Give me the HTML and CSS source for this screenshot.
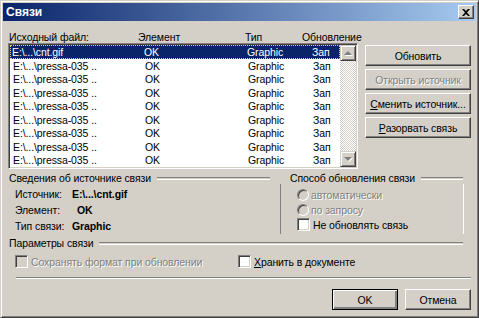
FILE: index.html
```html
<!DOCTYPE html>
<html lang="ru">
<head>
    <meta charset="UTF-8">
    <title>Связи</title>
    <link rel="stylesheet" href="styles.css">
</head>
<body>
<div class="window">
    <div class="titlebar">
        <span>Связи</span>
        <span class="close">
            <svg width="8" height="7" viewBox="0 0 8 7"><path d="M0 0h2l2 2 2-2h2L5 3.5 8 7H6L4 5 2 7H0l3-3.5z" fill="#000"/></svg>
        </span>
    </div>

    <div class="content">
        <div class="top">
            <div class="left">
                <div class="cols heads">
                    <span>Исходный файл:</span>
                    <span>Элемент</span>
                    <span>Тип</span>
                    <span>Обновление</span>
                </div>
                <div class="listbox">
                    <div class="rows">
                        <div class="cols row selected"><span>E:\...\cnt.gif</span><span>OK</span><span>Graphic</span><span>Зап</span></div>
                        <div class="cols row"><span>E:\...\pressa-035 ..</span><span>OK</span><span>Graphic</span><span>Зап</span></div>
                        <div class="cols row"><span>E:\...\pressa-035 ..</span><span>OK</span><span>Graphic</span><span>Зап</span></div>
                        <div class="cols row"><span>E:\...\pressa-035 ..</span><span>OK</span><span>Graphic</span><span>Зап</span></div>
                        <div class="cols row"><span>E:\...\pressa-035 ..</span><span>OK</span><span>Graphic</span><span>Зап</span></div>
                        <div class="cols row"><span>E:\...\pressa-035 ..</span><span>OK</span><span>Graphic</span><span>Зап</span></div>
                        <div class="cols row"><span>E:\...\pressa-035 ..</span><span>OK</span><span>Graphic</span><span>Зап</span></div>
                        <div class="cols row"><span>E:\...\pressa-035 ..</span><span>OK</span><span>Graphic</span><span>Зап</span></div>
                        <div class="cols row"><span>E:\...\pressa-035 ..</span><span>OK</span><span>Graphic</span><span>Зап</span></div>
                    </div>
                    <div class="scrollbar">
                        <div class="sbtn"><span class="arrow up"></span></div>
                        <div class="track"></div>
                        <div class="sbtn"><span class="arrow down"></span></div>
                    </div>
                </div>
            </div>
            <div class="side">
                <div class="btn">Обновить</div>
                <div class="btn disabled">Открыть источник</div>
                <div class="btn"><u>С</u>менить источник...</div>
                <div class="btn"><u>Р</u>азорвать связь</div>
            </div>
        </div>

        <div class="middle">
            <div class="group info">
                <div class="legend"><span>Сведения об источнике связи</span><i class="etch"></i></div>
                <div class="info-body">
                    <div class="info-row"><span class="lbl">Источник:</span><b>E:\...\cnt.gif</b></div>
                    <div class="info-row"><span class="lbl">Элемент:</span><b class="ok">OK</b></div>
                    <div class="info-row"><span class="lbl">Тип связи:</span><b>Graphic</b></div>
                </div>
            </div>
            <div class="group update">
                <div class="legend"><span>Способ обновления связи</span><i class="etch"></i></div>
                <div class="update-body">
                    <div class="opt disabled"><span class="radio"></span>автоматически</div>
                    <div class="opt disabled"><span class="radio"></span>по запросу</div>
                    <div class="opt"><span class="check"></span>Не обновлять связь</div>
                </div>
            </div>
        </div>

        <div class="params">
            <div class="legend"><span>Параметры связи</span><i class="etch"></i></div>
            <div class="params-body">
                <div class="opt disabled keep"><span class="check"></span>Сохранять формат при обновлении</div>
                <div class="opt"><span class="check"></span><span><u>Х</u>ранить в документе</span></div>
            </div>
        </div>

        <div class="separator"></div>

        <div class="footer">
            <div class="btn default">OK</div>
            <div class="btn">Отмена</div>
        </div>
    </div>
</div>
</body>
</html>
```

FILE: styles.css
```css
body {
    margin: 0;
    background: #d4d0c8;
    font-family: "Liberation Sans", Arial, sans-serif;
    font-size: 10.5px;
    letter-spacing: -0.1px;
    color: #000;
}
.window {
    width: 479px;
    height: 318px;
    box-sizing: border-box;
    border: 1px solid;
    border-color: #d4d0c8 #404040 #404040 #d4d0c8;
    box-shadow: inset 1px 1px #fff, inset -1px -1px #808080;
    padding: 1px 2px 2px 2px;
    display: flex;
    flex-direction: column;
}
.titlebar {
    height: 18px;
    margin-top: 1px;
    background: linear-gradient(to right, #0a246a, #a6caf0);
    color: #fff;
    font-weight: bold;
    font-size: 12px;
    letter-spacing: 0;
    display: flex;
    align-items: center;
    justify-content: space-between;
    padding: 0 2px 0 3px;
}
.close {
    width: 16px;
    height: 14px;
    box-sizing: border-box;
    background: #d4d0c8;
    border: 1px solid;
    border-color: #fff #404040 #404040 #fff;
    box-shadow: inset -1px -1px #808080;
    display: flex;
    align-items: center;
    justify-content: center;
}
.content {
    padding: 0 5px 0 5px;
}
.top {
    display: flex;
    gap: 7px;
    margin-top: 10px;
}
.left {
    width: 350px;
}
.cols {
    display: grid;
    line-height: 12px;
    white-space: nowrap;
}
.heads {
    grid-template-columns: 129px 107px 57px 57px;
    padding-left: 1px;
    height: 12px;
}
.listbox {
    height: 126px;
    box-sizing: border-box;
    border: 1px solid;
    border-color: #808080 #fff #fff #808080;
    box-shadow: inset 1px 1px #404040, inset -1px -1px #d4d0c8;
    background: #fff;
    padding: 1px;
    display: flex;
}
.rows {
    flex: 1;
}
.row {
    grid-template-columns: 132px 103px 65px auto;
    height: 13.5px;
    line-height: 13px;
    padding-left: 2px;
    box-sizing: border-box;
    border: 1px solid transparent;
}
.row.selected {
    background: #0a246a;
    color: #fff;
    border: 1px dotted #e8c870;
    padding-left: 1px;
}
.scrollbar {
    width: 16px;
    display: flex;
    flex-direction: column;
}
.sbtn {
    height: 16px;
    box-sizing: border-box;
    background: #d4d0c8;
    border: 1px solid;
    border-color: #d4d0c8 #404040 #404040 #d4d0c8;
    box-shadow: inset 1px 1px #fff, inset -1px -1px #808080;
    display: flex;
    align-items: center;
    justify-content: center;
}
.arrow {
    width: 0;
    height: 0;
    border-left: 4px solid transparent;
    border-right: 4px solid transparent;
}
.arrow.up {
    border-bottom: 4px solid #808080;
    filter: drop-shadow(1px 1px 0 #fff);
}
.arrow.down {
    border-top: 4px solid #808080;
    filter: drop-shadow(1px 1px 0 #fff);
}
.track {
    flex: 1;
    background-color: #fff;
    background-image: repeating-conic-gradient(#d4d0c8 0 25%, #fff 0 50%);
    background-size: 2px 2px;
}
.side {
    width: 106px;
    display: flex;
    flex-direction: column;
    gap: 3px;
    padding-top: 14px;
}
.btn {
    height: 21px;
    box-sizing: border-box;
    background: #d4d0c8;
    border: 1px solid;
    border-color: #fff #404040 #404040 #fff;
    box-shadow: inset -1px -1px #808080;
    display: flex;
    align-items: center;
    justify-content: center;
    white-space: nowrap;
}
.btn.default {
    border: 1px solid #000;
    box-shadow: inset 1px 1px #fff, inset -2px -2px #808080;
}
.disabled {
    color: #808080;
    text-shadow: 1px 1px 0 #fff;
}
.legend {
    display: flex;
    align-items: center;
    height: 12px;
    line-height: 12px;
    white-space: nowrap;
}
.etch {
    flex: 1;
    height: 1px;
    border-top: 1px solid #808080;
    border-bottom: 1px solid #fff;
    margin-left: 6px;
}
.middle {
    display: flex;
    gap: 10px;
    margin-top: 3px;
    padding-left: 1px;
}
.info {
    width: 261px;
}
.info-body {
    padding: 2px 0 0 6px;
}
.info-row {
    display: flex;
    height: 16px;
    align-items: center;
}
.lbl {
    width: 57px;
}
.ok {
    margin-left: 5px;
}
.update {
    width: 183px;
}
.update .legend span {
    margin-left: 10px;
}
.update-body {
    height: 50px;
    border-left: 1px solid #808080;
    box-shadow: 1px 0 0 #fff;
    padding: 3px 0 0 16px;
    box-sizing: border-box;
}
.opt {
    display: flex;
    align-items: center;
    gap: 2px;
    height: 15px;
    white-space: nowrap;
}
.radio {
    width: 12px;
    height: 12px;
    box-sizing: border-box;
    border-radius: 50%;
    border: 1px solid;
    border-color: #808080 #fff #fff #808080;
    box-shadow: inset 1px 1px #404040;
    background: #d4d0c8;
}
.check {
    width: 13px;
    height: 13px;
    box-sizing: border-box;
    border: 1px solid;
    border-color: #808080 #fff #fff #808080;
    box-shadow: inset 1px 1px #404040, inset -1px -1px #d4d0c8;
    background: #fff;
    margin-right: 1px;
}
.opt.disabled .check {
    background: #d4d0c8;
}
.params {
    margin-top: 3px;
    padding-left: 1px;
    width: 454px;
}
.params-body {
    display: flex;
    margin-top: 5px;
    padding-left: 6px;
}
.keep {
    width: 223px;
}
.separator {
    margin: 8px 0 0 8px;
    height: 0;
    border-top: 1px solid #808080;
    border-bottom: 1px solid #fff;
}
.footer {
    display: flex;
    justify-content: flex-end;
    gap: 7px;
    margin-top: 10px;
}
.footer .btn {
    width: 66px;
}
```
